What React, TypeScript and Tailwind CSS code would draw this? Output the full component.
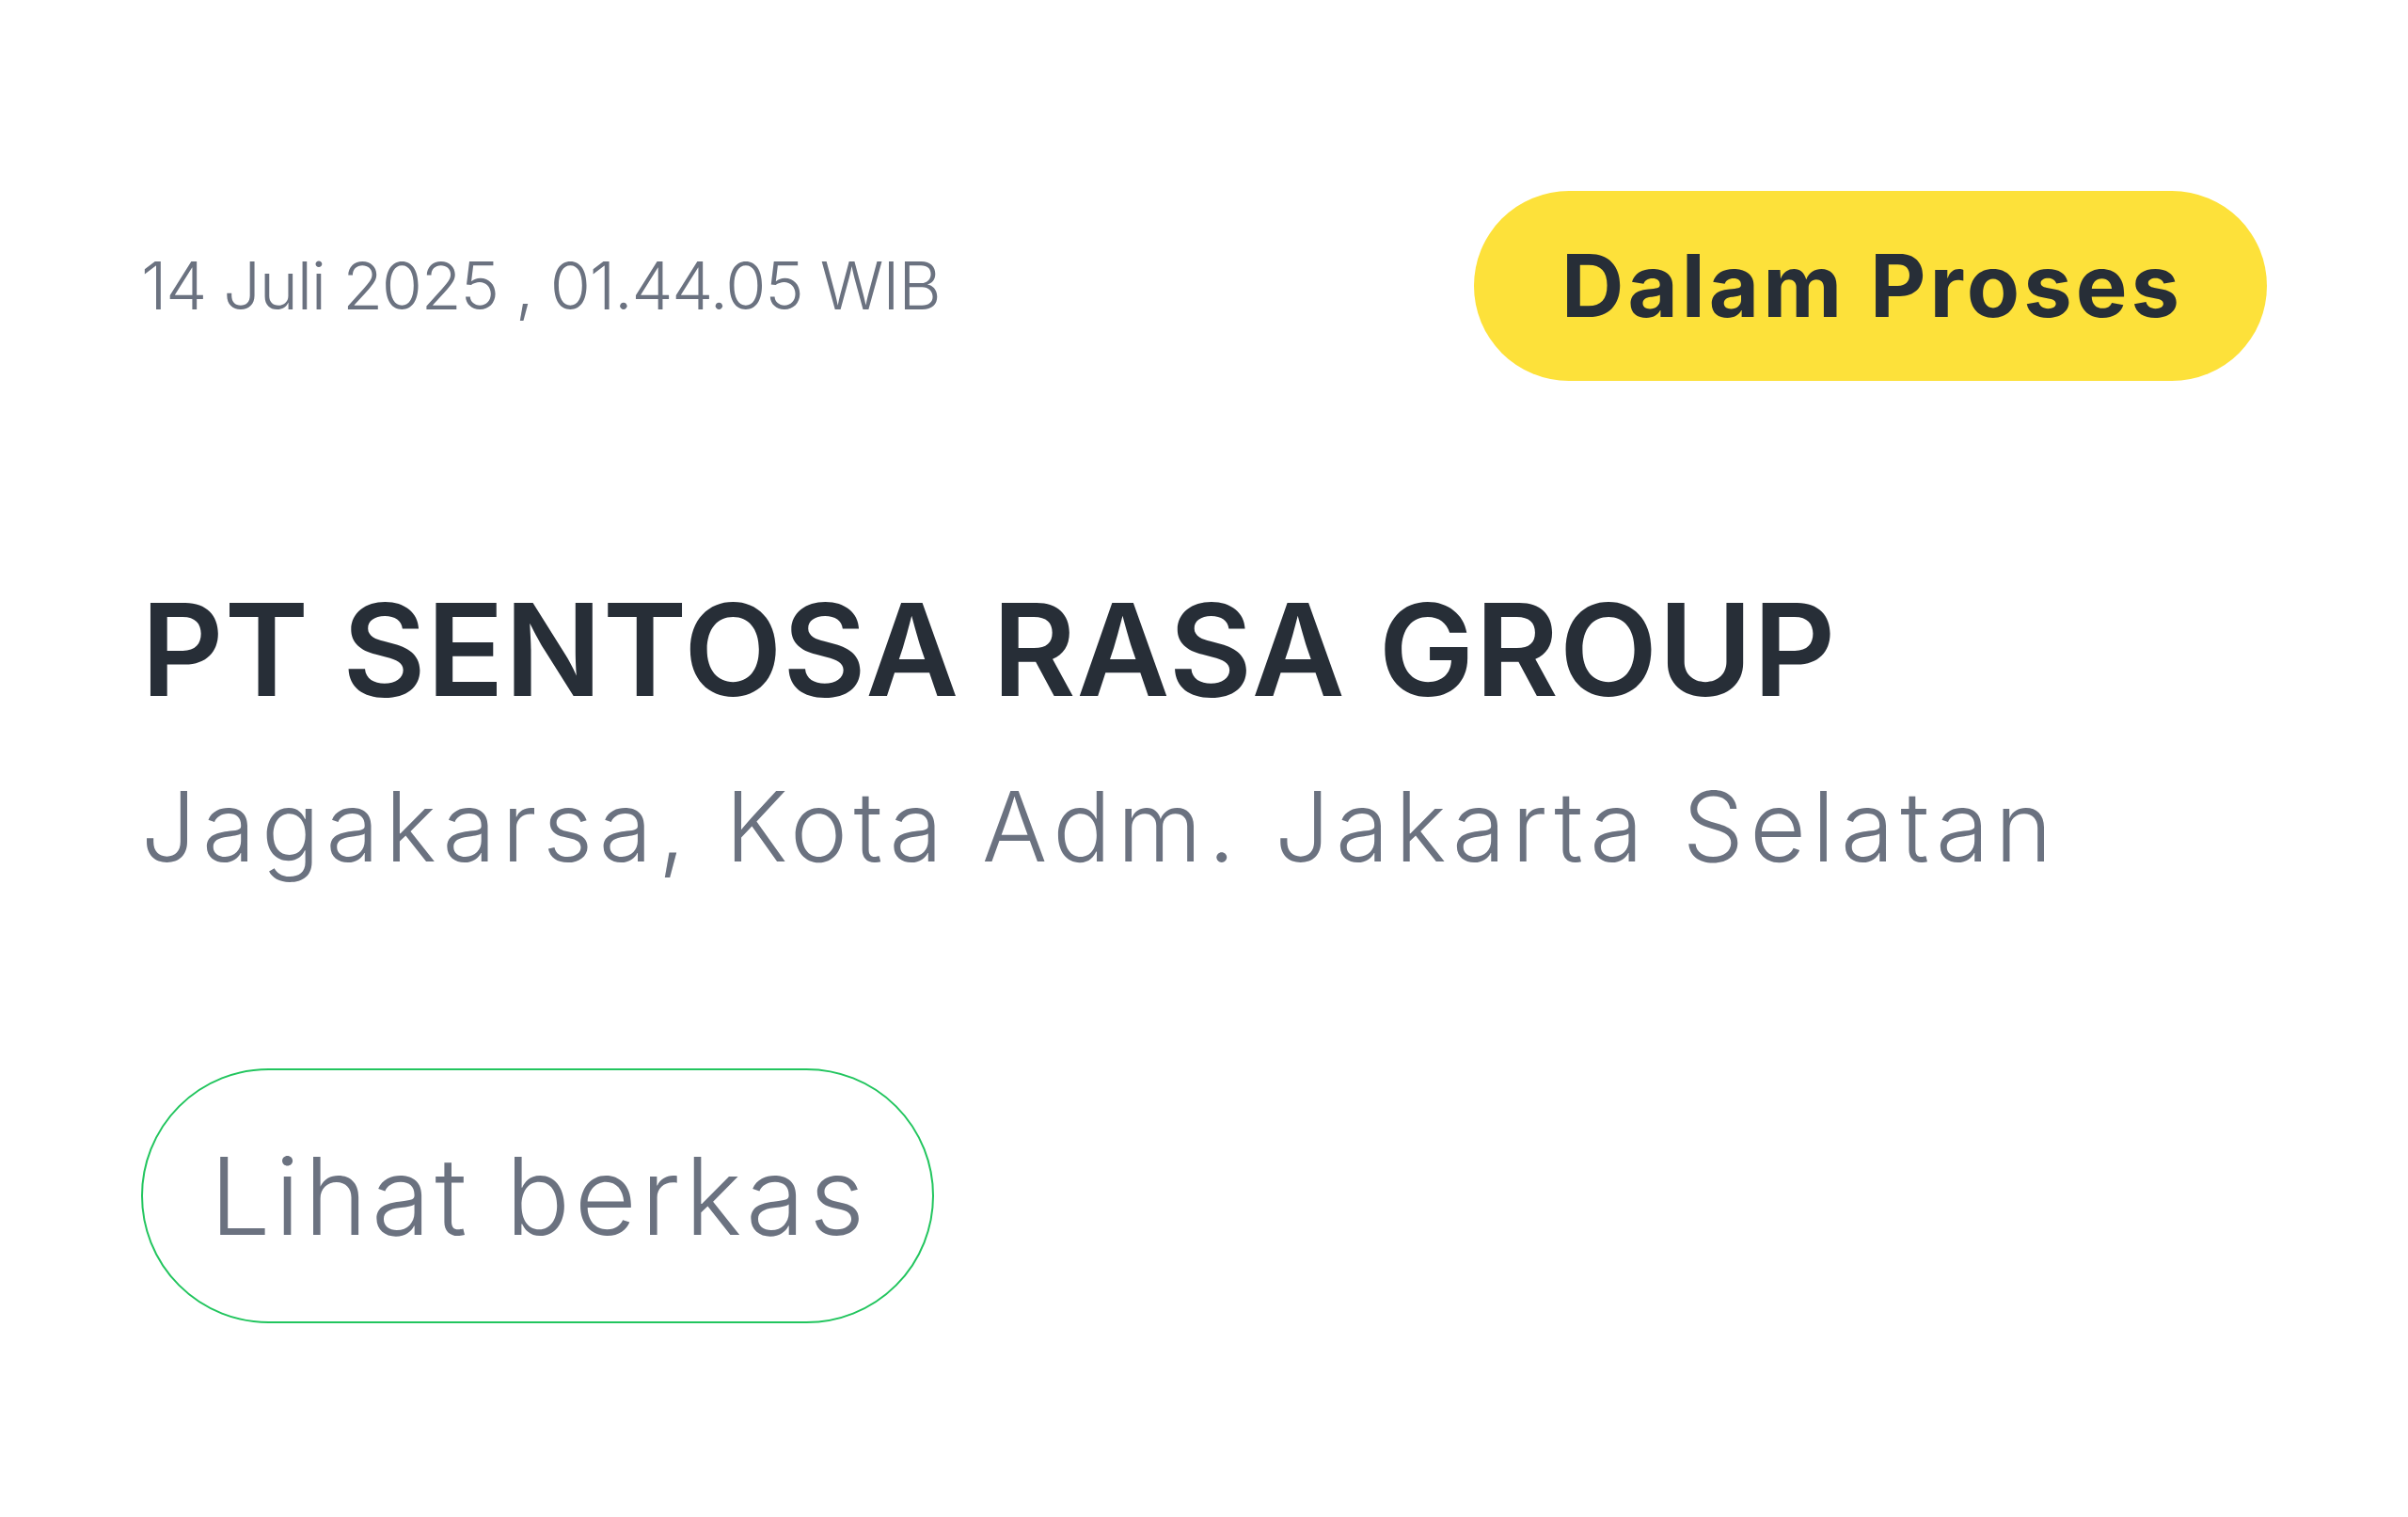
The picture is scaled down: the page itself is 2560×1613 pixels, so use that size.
export default function App() {
  return (
    <div className="min-h-screen bg-white px-[150px] pt-[203px] font-['Inter',sans-serif]">
      {/* Header: tanggal + status */}
      <div className="flex items-center justify-between">
        <span className="text-[70px] leading-none font-light tracking-[-1.3px] text-[#6b7280]">
          14 Juli 2025 , 01.44.05 WIB
        </span>
        <span className="flex h-[202px] w-[843px] items-center justify-center rounded-full bg-[#fde13a] pl-[4px] text-[92px] leading-none font-bold tracking-[4px] text-[#272e37]">
          Dalam Proses
        </span>
      </div>

      {/* Perusahaan */}
      <h1 className="mt-[218px] text-[136px] leading-none font-semibold tracking-[0.8px] text-[#272e37]">
        PT SENTOSA RASA GROUP
      </h1>
      <p className="mt-[68px] text-[103px] leading-none font-light tracking-[6.5px] text-[#6b7280]">
        Jagakarsa, Kota Adm. Jakarta Selatan
      </p>

      {/* Aksi */}
      <button
        type="button"
        className="mt-[206px] flex h-[271px] w-[843px] items-center justify-center rounded-full border-2 border-[#22c55e] pl-[4px] text-[114px] leading-none font-light tracking-[4.6px] text-[#6b7280]"
      >
        Lihat berkas
      </button>
    </div>
  )
}
